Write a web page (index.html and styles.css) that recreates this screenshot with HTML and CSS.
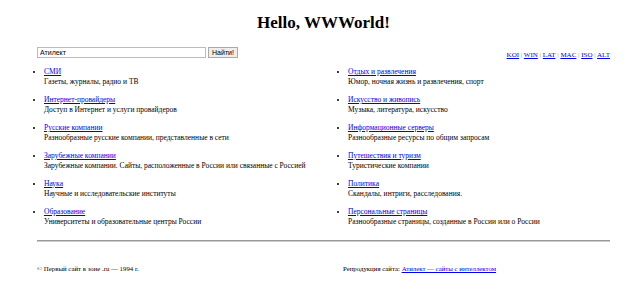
FILE: index.html
```html
<!DOCTYPE html>
<html lang="ru">
<head>
    <meta charset="UTF-8">
    <title>Hello, WWWorld!</title>
    <link rel="stylesheet" href="styles.css">
</head>
<body>
    <div class="page">
        <h1>Hello, WWWorld!</h1>

        <!-- Search + encodings -->
        <div class="top-row">
            <form class="search">
                <input type="text" value="Атилект">
                <button type="submit">Найти!</button>
            </form>
            <div class="encodings">
                <a href="#">KOI</a> | <a href="#">WIN</a> | <a href="#">LAT</a> | <a href="#">MAC</a> | <a href="#">ISO</a> | <a href="#">ALT</a>
            </div>
        </div>

        <!-- Catalogue -->
        <div class="columns">
            <ul class="catalog">
                <li><a href="#">СМИ</a><br>Газеты, журналы, радио и ТВ</li>
                <li><a href="#">Интернет-провайдеры</a><br>Доступ в Интернет и услуги провайдеров</li>
                <li><a href="#">Русские компании</a><br>Разнообразные русские компании, представленные в сети</li>
                <li><a href="#">Зарубежные компании</a><br>Зарубежные компании. Сайты, расположенные в России или связанные с Россией</li>
                <li><a href="#">Наука</a><br>Научные и исследовательские институты</li>
                <li><a href="#">Образование</a><br>Университеты и образовательные центры России</li>
            </ul>
            <ul class="catalog">
                <li><a href="#">Отдых и развлечения</a><br>Юмор, ночная жизнь и развлечения, спорт</li>
                <li><a href="#">Искусство и живопись</a><br>Музыка, литература, искусство</li>
                <li><a href="#">Информационные серверы</a><br>Разнообразные ресурсы по общим запросам</li>
                <li><a href="#">Путешествия и туризм</a><br>Туристические компании</li>
                <li><a href="#">Политика</a><br>Скандалы, интриги, расследования.</li>
                <li><a href="#">Персональные страницы</a><br>Разнообразные страницы, созданные в России или о России</li>
            </ul>
        </div>

        <hr>

        <div class="footer">
            <div>© Первый сайт в зоне .ru — 1994 г.</div>
            <div class="repro">Репродукция сайта: <a href="#">Атилект — сайты с интеллектом</a></div>
        </div>
    </div>
</body>
</html>
```

FILE: styles.css
```css
* {
    margin: 0;
    padding: 0;
    box-sizing: border-box;
}

body {
    font-family: 'Liberation Serif', 'Times New Roman', serif;
    font-size: 7.5px;
    line-height: 10px;
    color: #000;
    background: #fff;
}

a {
    color: #0000ee;
}

.page {
    width: 573px;
    margin-left: 37px;
}

h1 {
    font-size: 17px;
    line-height: 20px;
    text-align: center;
    padding-top: 13px;
}

/* Search row */
.top-row {
    display: flex;
    justify-content: space-between;
    align-items: flex-end;
    margin-top: 14px;
}

.search {
    display: flex;
    gap: 2px;
}

.search input {
    width: 169px;
    height: 11px;
    border: 1px solid #bbb;
    padding: 0 2px;
    font-family: 'Liberation Sans', Arial, sans-serif;
    font-size: 7px;
    color: #000;
}

.search button {
    width: 30px;
    height: 11px;
    border: 1px solid #aaa;
    background: #eee;
    font-family: 'Liberation Sans', Arial, sans-serif;
    font-size: 7px;
    line-height: 9px;
    color: #000;
}

.encodings {
    font-size: 7px;
    line-height: 9px;
    color: #888;
    margin-bottom: -2px;
}

/* Catalogue */
.columns {
    display: grid;
    grid-template-columns: 304px 1fr;
    margin-top: 9px;
}

.catalog {
    padding-left: 7px;
}

.catalog li {
    margin-bottom: 8px;
}

hr {
    border: none;
    border-top: 1px solid #999;
    border-bottom: 1px solid #ccc;
    margin-top: 5px;
}

.footer {
    display: grid;
    grid-template-columns: 306px 1fr;
    margin-top: 22px;
    font-size: 6.8px;
}
```
